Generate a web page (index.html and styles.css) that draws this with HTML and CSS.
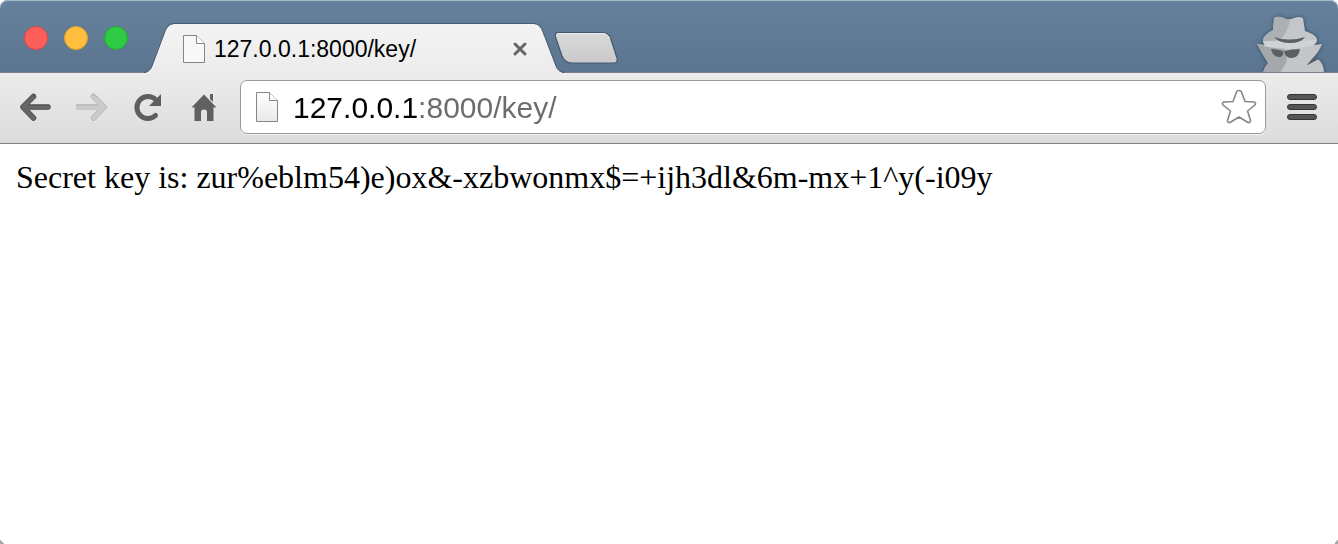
FILE: index.html
```html
<!DOCTYPE html>
<html lang="en">
<head>
<meta charset="utf-8">
<title>127.0.0.1:8000/key/</title>
<link rel="stylesheet" href="styles.css">
</head>
<body>
<div class="window">
  <header class="titlebar">
    <div class="lights">
      <button class="light light-close" aria-label="Close window"></button>
      <button class="light light-minimize" aria-label="Minimize window"></button>
      <button class="light light-zoom" aria-label="Zoom window"></button>
    </div>
    <div class="tab">
      <svg class="tab-edge" width="30" height="50" viewBox="0 0 30 50" aria-hidden="true">
        <defs><linearGradient id="tabFill" x1="0" y1="0" x2="0" y2="1"><stop offset="0" stop-color="#f3f3f3"/><stop offset="1" stop-color="#ececec"/></linearGradient></defs>
        <path d="M2 50V49Q6 48 8 43L20 11Q23 1 30 1V50Z" fill="url(#tabFill)"/>
        <path d="M0 49.500Q6 49 8 43L20 11Q23 .500 30 .500" fill="none" stroke="#46596e"/>
      </svg>
      <div class="tab-body">
        <svg class="page-icon" width="24" height="30" viewBox="0 0 24 30" aria-hidden="true">
          <path d="M1.500 1.500H14.500L22.500 9.500V28.500H1.500Z" fill="#f8f8f8" stroke="#858585"/>
          <path d="M14.500 1.500V9.500H22.500" fill="#fff" stroke="#858585"/>
        </svg>
        <span class="tab-title">127.0.0.1:8000/key/</span>
        <button class="tab-close" aria-label="Close tab">
          <svg width="16" height="16" viewBox="0 0 16 16"><path d="M3 3L13 13M13 3L3 13" stroke="#666" stroke-width="3" stroke-linecap="round"/></svg>
        </button>
      </div>
      <svg class="tab-edge" width="30" height="50" viewBox="0 0 30 50" aria-hidden="true">
        <path d="M28 50V49Q24 48 22 43L9 9Q6 1 0 1V50Z" fill="url(#tabFill)"/>
        <path d="M30 49.500Q24 49 22 43L9 9Q6 .500 0 .500" fill="none" stroke="#46596e"/>
      </svg>
    </div>
    <button class="new-tab" aria-label="New tab">
      <svg width="64" height="34" viewBox="0 0 64 34">
        <defs><linearGradient id="newFill" x1="0" y1="0" x2="0" y2="1"><stop offset="0" stop-color="#dadada"/><stop offset="1" stop-color="#c9c9c9"/></linearGradient></defs>
        <path d="M4 1.500H48Q54 1.500 56.500 7L63 27Q64 32 60 32H18Q11 32 8 25L1.500 6Q.500 1.500 4 1.500Z" fill="url(#newFill)" stroke="#435870" stroke-width="1.200"/>
        <path d="M5 2.500H48Q53 2.500 55.500 7" fill="none" stroke="#efefef"/>
      </svg>
    </button>
    <svg class="incognito" width="88" height="64" viewBox="0 0 88 64" role="img" aria-label="Incognito">
      <defs>
        <linearGradient id="spy" x1="0" y1="0" x2="0" y2="1"><stop offset="0" stop-color="#c5c7ca"/><stop offset="1" stop-color="#c3c5c7"/></linearGradient>
        <clipPath id="spyClip"><path d="M26 9Q31 8 36 11Q40 12 44 10Q49 8 53 10L55 23Q65 26 67 31Q67 35 64 37L72 36Q69 44 62 51L57 57L68 51Q74 56 74 65H13Q14 60 18 55Q12 45 7 36L15 37Q13 35 13 32Q14 27 23 22L24 11Q24 9 26 9Z"/></clipPath>
      </defs>
      <path class="spy-shadow" d="M26 9Q31 8 36 11Q40 12 44 10Q49 8 53 10L55 23Q65 26 67 31Q67 35 64 37L72 36Q69 44 62 51L57 57L68 51Q74 56 74 65H13Q14 60 18 55Q12 45 7 36L15 37Q13 35 13 32Q14 27 23 22L24 11Q24 9 26 9Z" fill="url(#spy)"/>
      <g clip-path="url(#spyClip)">
        <path d="M22 6H36L40 12Q38 23 32 30Q28 33 12 34V22H22Z" fill="#adb0b3"/>
        <path d="M6 35L17 37L34 40Q38 49 36 55L30 65H8Z" fill="#a4a8ac"/>
        <path d="M12 33Q40 34 67 32Q66 36 60 38Q38 44 14 38Z" fill="#d0d2d4"/>
      </g>
      <path d="M24 29Q39 34 55 29Q51 35 40 35Q29 35 24 29Z" fill="#5d6063"/>
      <path d="M21 41Q27 41 33 43Q34 49 29 49Q23 49 21 41ZM34 43Q42 41 50 41Q49 50 41 50Q35 50 34 43Z" fill="#5c5f62"/>
      <path d="M57 57L67 46L64 51L69 51Z" fill="#54606e"/>
    </svg>
  </header>

  <nav class="toolbar" aria-label="Navigation">
    <div class="nav-buttons">
      <button class="tool" aria-label="Back">
        <svg width="32" height="30" viewBox="0 0 32 30"><path d="M13.500 4.500L3 15L13.500 26M4 15H28" fill="none" stroke="#4e4e4e" stroke-width="5.500" stroke-linecap="round" stroke-linejoin="round"/><path d="M13.500 5L3 15L13.500 26M4 15.500H28" fill="none" stroke="#666" stroke-width="4" stroke-linecap="round" stroke-linejoin="round"/></svg>
      </button>
      <button class="tool" aria-label="Forward" disabled>
        <svg width="32" height="30" viewBox="0 0 32 30"><path d="M17.500 4.500L28 15L17.500 26M27 15H2" fill="none" stroke="#b5b5b5" stroke-width="5.500" stroke-linecap="round" stroke-linejoin="round"/><path d="M17.500 5L28 15L17.500 26M27 15.500H2" fill="none" stroke="#cbcbcb" stroke-width="4" stroke-linecap="round" stroke-linejoin="round"/></svg>
      </button>
      <button class="tool" aria-label="Reload">
        <svg width="32" height="30" viewBox="0 0 32 30"><path d="M23.500 23.500A11 11 0 1 1 23.500 7.500" fill="none" stroke="#5e5e5e" stroke-width="5" stroke-linecap="round"/><path d="M29 2V14H17Z" fill="#5e5e5e"/></svg>
      </button>
      <button class="tool" aria-label="Home">
        <svg width="32" height="30" viewBox="0 0 32 30"><path d="M16 2.500L28.500 15.500H25.500V29H19V20Q19 17.500 16 17.500Q13 17.500 13 20V29H6.500V15.500H3.500ZM22 2H25V10L22 7Z" fill="#606060"/></svg>
      </button>
    </div>
    <div class="omnibox">
      <svg class="page-icon" width="24" height="32" viewBox="0 0 24 32" aria-hidden="true">
        <defs><linearGradient id="paper" x1="0" y1="0" x2="0" y2="1"><stop offset="0" stop-color="#fff"/><stop offset="1" stop-color="#e9e9e9"/></linearGradient></defs>
        <path d="M1.500 1.500H14.500L22.500 9.500V30.500H1.500Z" fill="url(#paper)" stroke="#858585"/>
        <path d="M14.500 1.500V9.500H22.500" fill="#fff" stroke="#858585"/>
      </svg>
      <input class="url" type="text" value="127.0.0.1:8000/key/" aria-label="Address" spellcheck="false">
      <button class="star" aria-label="Bookmark this page">
        <svg width="36" height="36" viewBox="0 0 36 36"><path d="M18 1.500Q20 1.500 20.500 3L24 12.500L33 13Q35.500 14 34 16L26.500 22L29.500 31.500Q29.500 34 27 33.500L18 28L9 33.500Q6.500 34 6.500 31.500L9.500 22L2 16Q.500 14 3 13L12 12.500L15.500 3Q16 1.500 18 1.500Z" fill="#fff" stroke="#858585" stroke-width="1.600" stroke-linejoin="round"/></svg>
      </button>
    </div>
    <button class="menu" aria-label="Menu">
      <svg width="32" height="28" viewBox="0 0 32 28"><g fill="#555" stroke="#363636"><rect x="1.500" y="1.500" width="29" height="5" rx="2.500"/><rect x="1.500" y="11.500" width="29" height="5" rx="2.500"/><rect x="1.500" y="21.500" width="29" height="5" rx="2.500"/></g></svg>
    </button>
  </nav>

  <main class="page">Secret key is: zur%eblm54)e)ox&amp;-xzbwonmx$=+ijh3dl&amp;6m-mx+1^y(-i09y</main>
</div>
</body>
</html>
```
FILE: styles.css
```css
* {
  box-sizing: border-box;
}

body {
  margin: 0;
  background: #fff;
  font-family: "Liberation Sans", Arial, sans-serif;
}

button {
  padding: 0;
  border: 0;
  background: none;
}

svg {
  display: block;
  flex: none;
}

.window {
  position: relative;
  display: flex;
  flex-direction: column;
  min-height: 100vh;
}

.window::before,
.window::after {
  content: "";
  position: absolute;
  bottom: 0;
  width: 4px;
  height: 4px;
}

.window::before {
  left: 0;
  background: linear-gradient(45deg, #aaa 50%, transparent 50%);
}

.window::after {
  right: 0;
  background: linear-gradient(-45deg, #aaa 50%, transparent 50%);
}

.titlebar {
  display: flex;
  align-items: flex-end;
  height: 73px;
  border-radius: 8px 8px 0 0;
  background: linear-gradient(#66819d, #5b7590);
  box-shadow: inset 0 1px #a9bac9, inset 0 -1px #77818b;
}

.lights {
  display: flex;
  align-self: flex-start;
  gap: 16px;
  padding: 26px 16px 0 24px;
}

.light {
  width: 24px;
  height: 24px;
  border: 1px solid;
  border-radius: 50%;
}

.light-close {
  border-color: #e2453f;
  background: #ff5f5a;
}

.light-minimize {
  border-color: #dfa023;
  background: #ffbe3f;
}

.light-zoom {
  border-color: #22a932;
  background: #30cb45;
}

.tab {
  display: flex;
  width: 420px;
}

.tab-body {
  display: flex;
  flex: 1;
  align-items: center;
  gap: 8px;
  height: 50px;
  padding: 0 6px 0 8px;
  border-top: 1px solid #46596e;
  background: linear-gradient(#f3f3f3, #ececec);
}

.tab-title {
  flex: 1;
  font-size: 23px;
  line-height: 28px;
  white-space: nowrap;
}

.new-tab {
  margin: 0 auto 8px -10px;
}

.incognito {
  margin-bottom: 1px;
}

.spy-shadow {
  filter: drop-shadow(0 0 2px #34495f);
}

.toolbar {
  display: flex;
  align-items: center;
  gap: 20px;
  height: 71px;
  padding: 0 20px 2px 20px;
  border-bottom: 1px solid #808080;
  background: linear-gradient(#ececec, #dcdcdc);
}

.nav-buttons {
  display: flex;
  gap: 24px;
}

.omnibox {
  display: flex;
  flex: 1;
  align-items: center;
  gap: 14px;
  height: 54px;
  padding: 0 8px 0 14px;
  border: 1px solid #999;
  border-radius: 7px;
  background: #fff;
  box-shadow: 0 1px #f3f3f3;
}

.url {
  flex: 1;
  min-width: 0;
  height: 40px;
  padding: 2px 0 0;
  border: 0;
  outline: 0;
  background: linear-gradient(90deg, #000 125px, #6c6c6c 125px);
  background-clip: text;
  -webkit-background-clip: text;
  color: transparent;
  caret-color: #000;
  font: 30px "Liberation Sans", Arial, sans-serif;
}

.page {
  flex: 1;
  padding: 16px;
  font-family: "Liberation Serif", "Times New Roman", serif;
  font-size: 32px;
  line-height: 34px;
  overflow-wrap: anywhere;
}
```
